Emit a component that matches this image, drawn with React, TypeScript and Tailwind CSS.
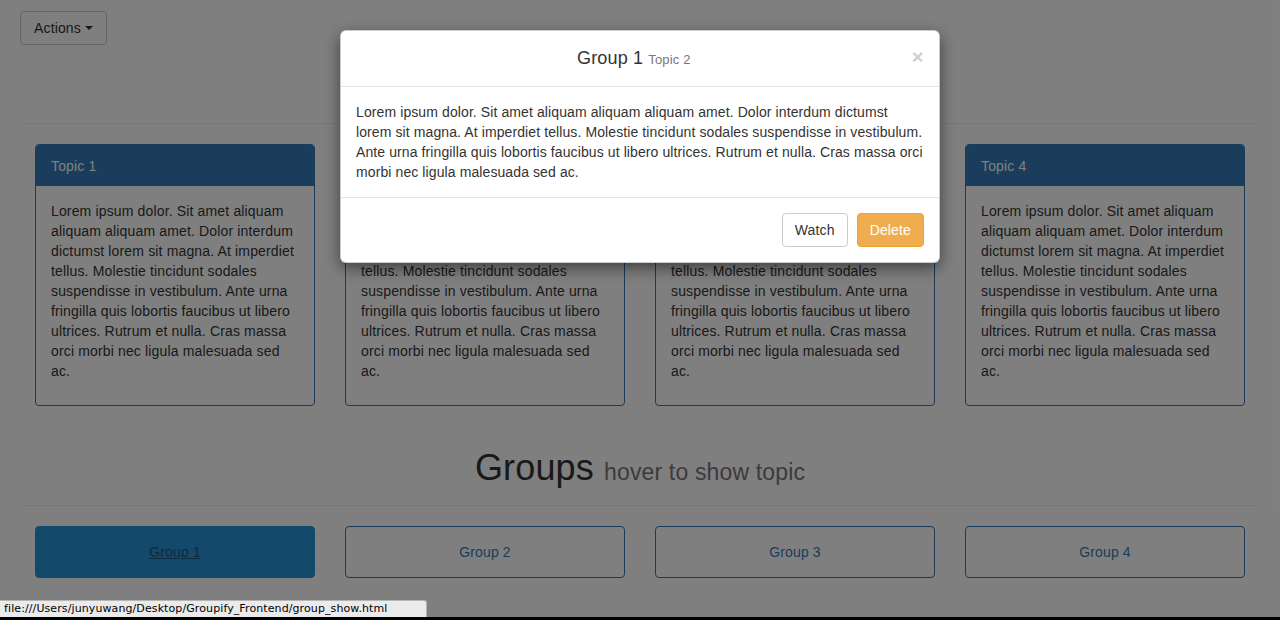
import React from "react";

const lorem =
  "Lorem ipsum dolor. Sit amet aliquam aliquam aliquam amet. Dolor interdum dictumst lorem sit magna. At imperdiet tellus. Molestie tincidunt sodales suspendisse in vestibulum. Ante urna fringilla quis lobortis faucibus ut libero ultrices. Rutrum et nulla. Cras massa orci morbi nec ligula malesuada sed ac.";

const topics = ["Topic 1", "Topic 2", "Topic 3", "Topic 4"];
const groups = ["Group 1", "Group 2", "Group 3", "Group 4"];

const App: React.FC = () => {
  return (
    <div
      className="relative w-[1280px] h-[620px] overflow-hidden bg-white text-[14px] leading-[20px] tracking-[0.15px] text-[#333]"
      style={{ fontFamily: '"Liberation Sans", Arial, sans-serif' }}
    >
      {/* Page */}
      <div className="px-5 pt-[11px]">
        <button className="h-[34px] px-[13px] flex items-center gap-1 border border-[#ccc] rounded bg-white text-[#333]">
          Actions
          <span className="w-0 h-0 border-t-4 border-x-4 border-x-transparent border-t-[#333]" />
        </button>

        {/* Topics heading (under the modal) */}
        <div className="h-[78px] flex items-center justify-center">
          <h1 className="text-[36px] leading-[40px] text-[#333]">
            Topics <span className="text-[23px] text-[#777]">hover to show group</span>
          </h1>
        </div>
        <div className="border-t border-[#eee]" />

        {/* Topic cards */}
        <div className="px-[15px] mt-5 grid grid-cols-4 gap-[30px]">
          {topics.map((t) => (
            <div key={t} className="border border-[#337ab7] rounded overflow-hidden">
              <div className="h-[41px] bg-[#337ab7] text-white text-[14px] flex items-center px-[15px]">
                {t}
              </div>
              <div className="px-[15px] pt-[15px] pb-6">{lorem}</div>
            </div>
          ))}
        </div>

        {/* Groups heading */}
        <div className="mt-[42px] mb-[13px] text-center">
          <h1 className="text-[36px] leading-[40px] text-[#333]">
            Groups <span className="text-[23px] text-[#777]">hover to show topic</span>
          </h1>
        </div>
        <div className="border-t border-[#eee]" />

        {/* Group buttons */}
        <div className="px-[15px] mt-5 grid grid-cols-4 gap-[30px]">
          {groups.map((g, i) =>
            i === 0 ? (
              <button
                key={g}
                className="h-[52px] rounded bg-[#2694d6] border border-[#2694d6] text-[#23527c] underline"
              >
                {g}
              </button>
            ) : (
              <button
                key={g}
                className="h-[52px] rounded bg-white border border-[#337ab7] text-[#337ab7]"
              >
                {g}
              </button>
            )
          )}
        </div>
      </div>

      {/* Backdrop */}
      <div className="absolute inset-0 bg-black/50" />

      {/* Modal */}
      <div className="absolute left-[340px] top-[30px] w-[600px] bg-white rounded-md border border-black/20 shadow-[0_5px_15px_rgba(0,0,0,0.5)]">
        <div className="h-[56px] px-[15px] flex items-center border-b border-[#e5e5e5]">
          <h4 className="flex-1 text-center text-[18px] leading-[26px] text-[#333] font-medium">
            Group 1 <span className="text-[13px] text-[#777] font-normal">Topic 2</span>
          </h4>
          <span className="text-[21px] font-bold leading-none text-black/20 -mt-[4px]">×</span>
        </div>
        <div className="p-[15px] text-[#333] tracking-[0.1px]">{lorem}</div>
        <div className="border-t border-[#e5e5e5] p-[15px] flex justify-end gap-[9px]">
          <button className="h-[34px] px-3 rounded border border-[#ccc] bg-white text-[#333]">
            Watch
          </button>
          <button className="h-[34px] px-3 rounded border border-[#eea236] bg-[#f0ad4e] text-white">
            Delete
          </button>
        </div>
      </div>

      {/* Browser status bar */}
      <div
        className="absolute left-0 bottom-[3px] w-[427px] h-[17px] bg-[#ebebeb] border-t border-r border-[#b5b5b5] rounded-tr-[3px] px-[4px] flex items-center text-[11px] tracking-[0.1px] text-black"
        style={{ fontFamily: '"DejaVu Sans", sans-serif' }}
      >
        file:///Users/junyuwang/Desktop/Groupify_Frontend/group_show.html
      </div>
      <div className="absolute left-0 right-0 bottom-0 h-[3px] bg-black" />
    </div>
  );
};

export default App;
